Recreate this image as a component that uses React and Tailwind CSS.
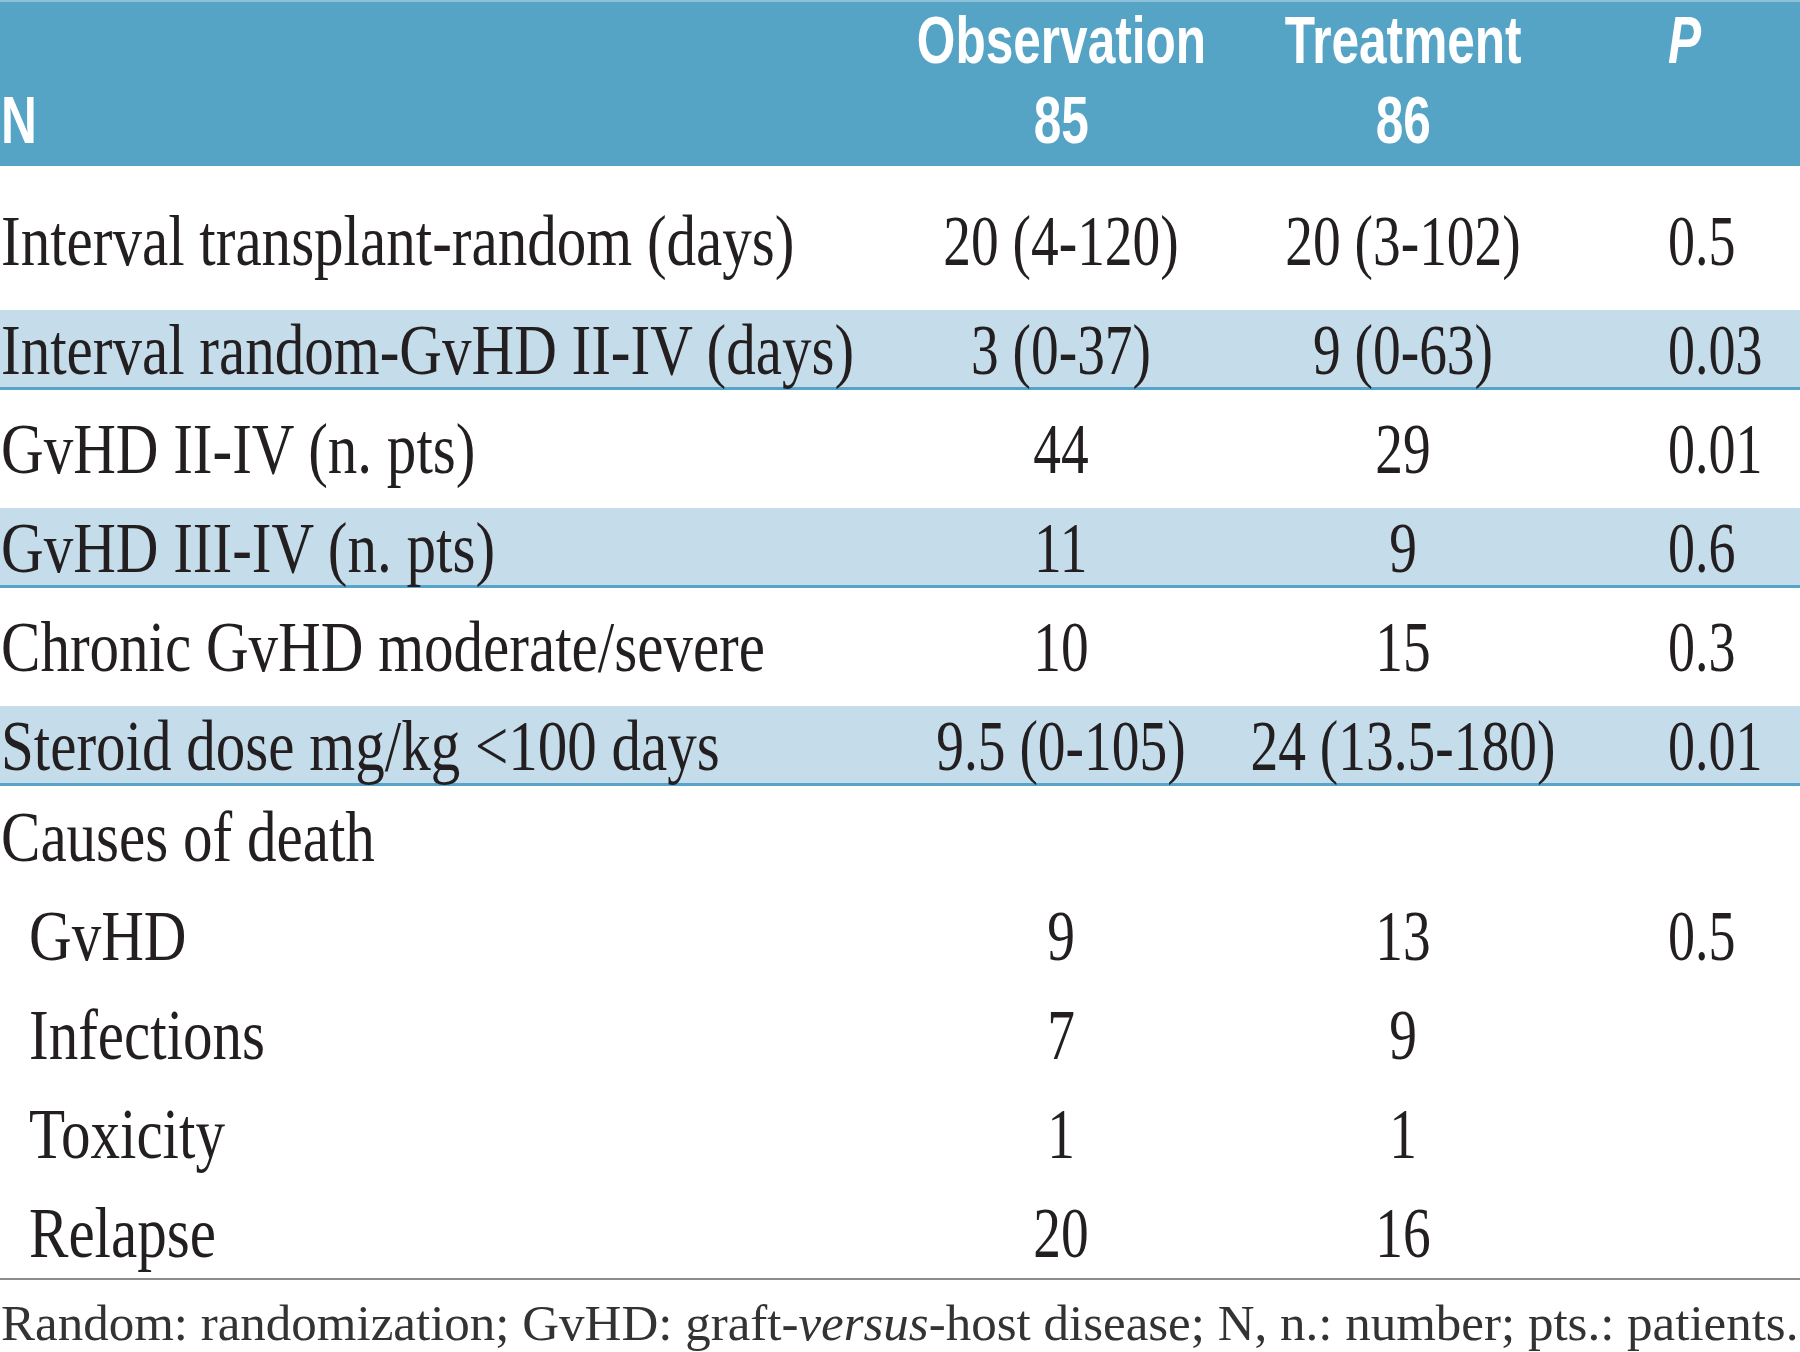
import React from 'react';

// Table rows: label, observation, treatment, p-value
const mainRows = [
  { label: 'Interval transplant-random (days)', obs: '20 (4-120)', trt: '20 (3-102)', p: '0.5', kind: 'first' },
  { label: 'Interval random-GvHD II-IV (days)', obs: '3 (0-37)', trt: '9 (0-63)', p: '0.03', kind: 'band' },
  { label: 'GvHD II-IV (n. pts)', obs: '44', trt: '29', p: '0.01', kind: 'white' },
  { label: 'GvHD III-IV (n. pts)', obs: '11', trt: '9', p: '0.6', kind: 'band' },
  { label: 'Chronic GvHD moderate/severe', obs: '10', trt: '15', p: '0.3', kind: 'white' },
  { label: 'Steroid dose mg/kg <100 days', obs: '9.5 (0-105)', trt: '24 (13.5-180)', p: '0.01', kind: 'band' },
];

const deathRows = [
  { label: 'GvHD', obs: '9', trt: '13', p: '0.5' },
  { label: 'Infections', obs: '7', trt: '9', p: '' },
  { label: 'Toxicity', obs: '1', trt: '1', p: '' },
  { label: 'Relapse', obs: '20', trt: '16', p: '', last: true },
];

const grid = 'grid grid-cols-[921px_280px_404px_1fr]';

const rowClass = {
  first: 'h-[144px] pt-[6px]',
  white: 'h-[118px]',
  band: 'h-[80px] bg-[#c5dcea] border-b-[3px] border-[#56a5c8]',
};

// condensed serif text, left aligned
const Label = ({ children, indent }) => (
  <div className={`flex items-center ${indent ? 'pl-[29px]' : 'pl-[1px]'}`}>
    <span className="inline-block shrink-0 whitespace-nowrap origin-left scale-x-[0.82]">{children}</span>
  </div>
);

// condensed numbers, centered in their column
const Num = ({ children }) => (
  <div className="flex items-center justify-center">
    <span className="inline-block shrink-0 whitespace-nowrap origin-center scale-x-[0.77]">{children}</span>
  </div>
);

const PVal = ({ children }) => (
  <div className="flex items-center pl-[63px]">
    <span className="inline-block shrink-0 whitespace-nowrap origin-left scale-x-[0.75]">{children}</span>
  </div>
);

const Head = ({ children, center, italic, lead }) => (
  <div className={`flex ${lead} ${center ? 'justify-center' : ''}`}>
    <span className={`inline-block shrink-0 whitespace-nowrap scale-x-[0.74] ${center ? 'origin-center' : 'origin-left'} ${italic ? 'italic' : ''}`}>
      {children}
    </span>
  </div>
);

export default function App() {
  return (
    <div className="w-[1800px] h-[1352px] overflow-hidden bg-white text-[#231f20] font-['Liberation_Serif',serif]">
      {/* Header band */}
      <div className={`${grid} h-[166px] bg-[#55a3c5] border-t-2 border-[#8cc1da] text-white font-['Liberation_Sans',sans-serif] font-bold text-[67px]`}>
        <div className="flex flex-col pl-[1px]">
          <div className="h-[76px]" />
          <Head lead="leading-[84px]">N</Head>
        </div>
        <div className="flex flex-col">
          <Head center lead="leading-[76px]">Observation</Head>
          <Head center lead="leading-[84px]">85</Head>
        </div>
        <div className="flex flex-col">
          <Head center lead="leading-[76px]">Treatment</Head>
          <Head center lead="leading-[84px]">86</Head>
        </div>
        <div className="flex flex-col pl-[63px]">
          <Head italic lead="leading-[76px]">P</Head>
        </div>
      </div>

      {/* Main rows */}
      <div className="text-[72px] leading-[80px]">
        {mainRows.map((r) => (
          <div key={r.label} className={`${grid} ${rowClass[r.kind]}`}>
            <Label>{r.label}</Label>
            <Num>{r.obs}</Num>
            <Num>{r.trt}</Num>
            <PVal>{r.p}</PVal>
          </div>
        ))}

        {/* Causes of death block */}
        <div className="border-b-2 border-[#8c8c8c] pt-[1px]">
          <div className={`${grid} h-[99px]`}>
            <Label>Causes of death</Label>
          </div>
          {deathRows.map((r) => (
            <div key={r.label} className={`${grid} ${r.last ? 'h-[95px] pt-[5px]' : 'h-[99px]'}`}>
              <Label indent>{r.label}</Label>
              <Num>{r.obs}</Num>
              <Num>{r.trt}</Num>
              <PVal>{r.p}</PVal>
            </div>
          ))}
        </div>
      </div>

      {/* Footnote */}
      <div className="pt-[12px] pl-[1px] text-[51px] leading-[62px] text-[#333] whitespace-nowrap">
        Random: randomization; GvHD: graft-<i>versus</i>-host disease; N, n.: number; pts.: patients.
      </div>
    </div>
  );
}
